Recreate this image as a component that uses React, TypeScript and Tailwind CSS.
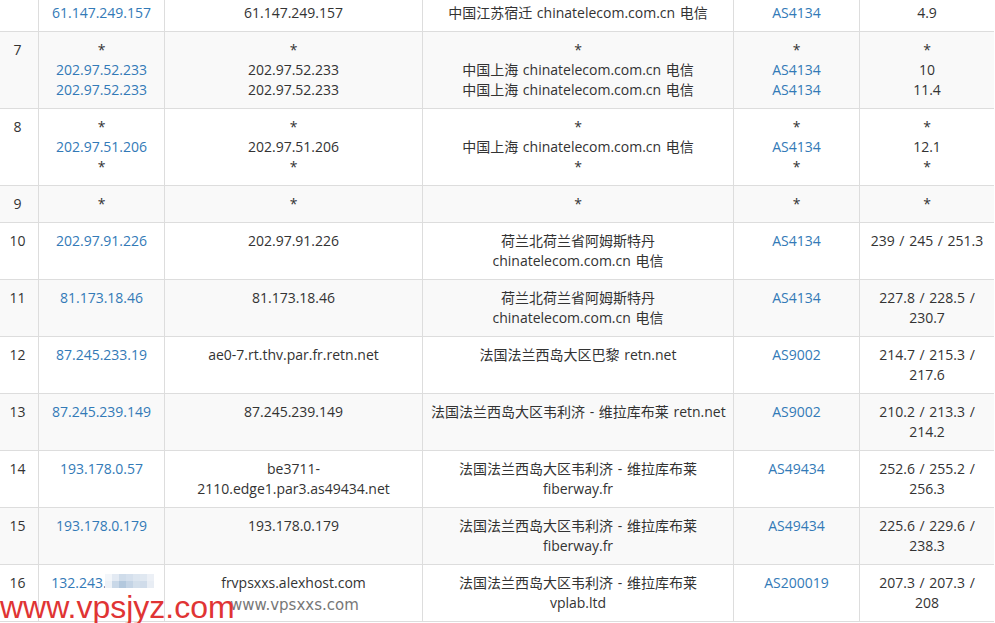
const rows: { no?: string; ip: string[]; host: string[]; geo: string[]; as: string[]; ms: string[]; first?: boolean; blur?: boolean }[] = [
  { ip: ["61.147.249.157"], host: ["61.147.249.157"], geo: ["中国江苏宿迁 chinatelecom.com.cn 电信"], as: ["AS4134"], ms: ["4.9"], first: true },
  {
    no: "7",
    ip: ["*", "202.97.52.233", "202.97.52.233"],
    host: ["*", "202.97.52.233", "202.97.52.233"],
    geo: ["*", "中国上海 chinatelecom.com.cn 电信", "中国上海 chinatelecom.com.cn 电信"],
    as: ["*", "AS4134", "AS4134"],
    ms: ["*", "10", "11.4"],
  },
  {
    no: "8",
    ip: ["*", "202.97.51.206", "*"],
    host: ["*", "202.97.51.206", "*"],
    geo: ["*", "中国上海 chinatelecom.com.cn 电信", "*"],
    as: ["*", "AS4134", "*"],
    ms: ["*", "12.1", "*"],
  },
  { no: "9", ip: ["*"], host: ["*"], geo: ["*"], as: ["*"], ms: ["*"] },
  { no: "10", ip: ["202.97.91.226"], host: ["202.97.91.226"], geo: ["荷兰北荷兰省阿姆斯特丹", "chinatelecom.com.cn 电信"], as: ["AS4134"], ms: ["239 / 245 / 251.3"] },
  { no: "11", ip: ["81.173.18.46"], host: ["81.173.18.46"], geo: ["荷兰北荷兰省阿姆斯特丹", "chinatelecom.com.cn 电信"], as: ["AS4134"], ms: ["227.8 / 228.5 /", "230.7"] },
  { no: "12", ip: ["87.245.233.19"], host: ["ae0-7.rt.thv.par.fr.retn.net"], geo: ["法国法兰西岛大区巴黎 retn.net"], as: ["AS9002"], ms: ["214.7 / 215.3 /", "217.6"] },
  { no: "13", ip: ["87.245.239.149"], host: ["87.245.239.149"], geo: ["法国法兰西岛大区韦利济 - 维拉库布莱 retn.net"], as: ["AS9002"], ms: ["210.2 / 213.3 /", "214.2"] },
  { no: "14", ip: ["193.178.0.57"], host: ["be3711-", "2110.edge1.par3.as49434.net"], geo: ["法国法兰西岛大区韦利济 - 维拉库布莱", "fiberway.fr"], as: ["AS49434"], ms: ["252.6 / 255.2 /", "256.3"] },
  { no: "15", ip: ["193.178.0.179"], host: ["193.178.0.179"], geo: ["法国法兰西岛大区韦利济 - 维拉库布莱", "fiberway.fr"], as: ["AS49434"], ms: ["225.6 / 229.6 /", "238.3"] },
  { no: "16", ip: ["132.243."], host: ["frvpsxxs.alexhost.com", "\u00a0"], geo: ["法国法兰西岛大区韦利济 - 维拉库布莱", "vplab.ltd"], as: ["AS200019"], ms: ["207.3 / 207.3 /", "208"], blur: true },
];

const mosaic = [
  "#f3f6fa", "#e3eaf3", "#cfdcea", "#d5e0ed", "#dde6f0", "#e0e8f1", "#ecf0f6",
  "#eef2f7", "#c9d8e8", "#b3c8dd", "#c4d4e5", "#d3dfeb", "#d0dcea", "#e8edf4",
];

function Lines({ items, link, blur }: { items: string[]; link?: boolean; blur?: boolean }) {
  return (
    <>
      {items.map((t, i) => (
        <div key={i} className={`${link && t !== "*" ? "text-[#337ab7]" : ""} ${blur ? "pr-[45px]" : ""}`}>
          {t}
        </div>
      ))}
    </>
  );
}

export default function App() {
  const td = "border-r border-b border-[#ddd] px-2 py-2 align-top text-center";
  return (
    <div className="relative h-[623px] w-[995px] overflow-hidden whitespace-nowrap bg-white font-['Open_Sans','Noto_Sans_CJK_SC',sans-serif] text-[14px] leading-5 text-[#333] [word-spacing:1px]">
      <table className="w-[994px] table-fixed border-separate border-spacing-0">
        <colgroup>
          <col className="w-[39px]" />
          <col className="w-[126px]" />
          <col className="w-[258px]" />
          <col className="w-[311px]" />
          <col className="w-[126px]" />
          <col className="w-[134px]" />
        </colgroup>
        <tbody>
          {rows.map((r, i) => (
            <tr key={i} className={i % 2 === 1 ? "bg-[#f9f9f9]" : "bg-white"}>
              <td className={`${r.first ? "border-b border-r border-[#ddd] px-0 pt-[3px] pb-2" : "border-r border-b border-[#ddd] py-2"} pr-[3px] text-center align-top`}>{r.no}</td>
              {([
                [r.ip, true],
                [r.host, false],
                [r.geo, false],
                [r.as, true],
                [r.ms, false],
              ] as [string[], boolean][]).map(([items, link], j) => (
                <td
                  key={j}
                  className={`${r.first ? "border-r border-b border-[#ddd] px-2 pt-[3px] pb-2 align-top text-center" : td} ${j === 4 ? "border-r-0" : ""}`}
                >
                  <Lines items={items} link={link} blur={r.blur && j === 0} />
                </td>
              ))}
            </tr>
          ))}
        </tbody>
      </table>

      {/* blurred part of the last address */}
      <div className="absolute left-[105px] top-[574px] grid h-[14px] w-[49px] grid-cols-7 grid-rows-2">
        {mosaic.map((c, i) => (
          <div key={i} style={{ backgroundColor: c }} />
        ))}
      </div>

      {/* watermarks */}
      <div className="absolute left-[230px] top-[595px] font-['DejaVu_Sans',sans-serif] text-[15px] leading-5 text-[#777]">
        www.vpsxxs.com
      </div>
      <div className="absolute left-0 top-[589px] font-['Liberation_Sans',sans-serif] text-[32px] leading-9 text-[#e03434]">
        www.vpsjyz.com
      </div>
    </div>
  );
}
